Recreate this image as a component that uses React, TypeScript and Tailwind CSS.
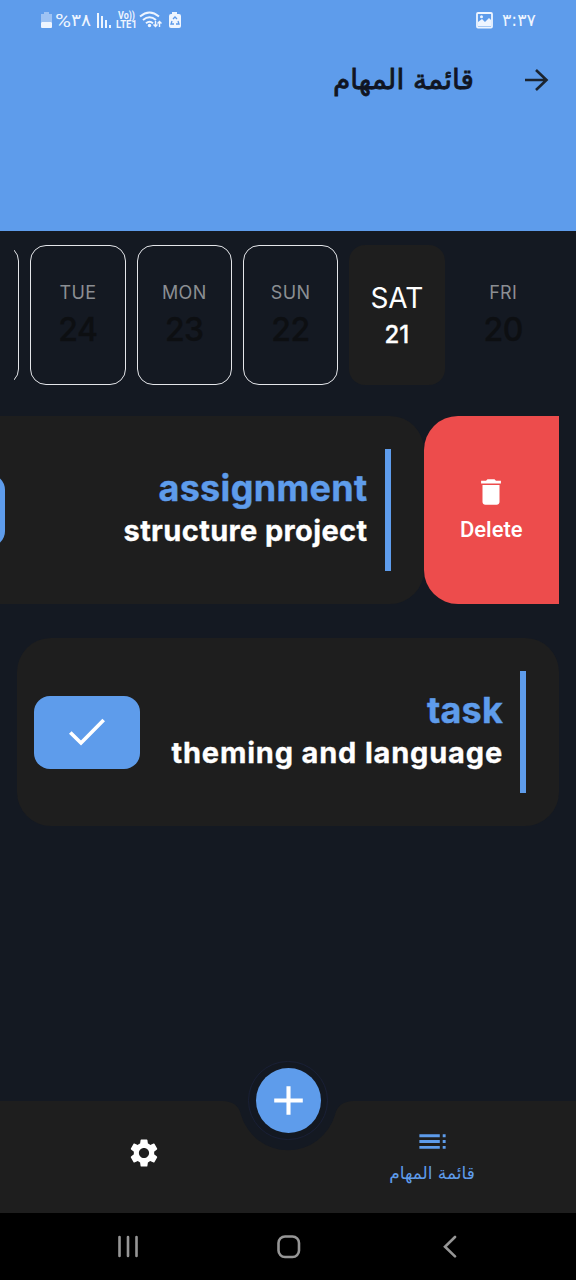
import React from "react";
import { MdAdd, MdDelete, MdSettings, MdToc } from "react-icons/md";

const ARABIC = "font-['DejaVu_Sans',sans-serif]";

function StatusBar() {
  return (
    <div className="flex h-10 items-center justify-between pl-10 pr-[40px] text-white">
      <svg width="142" height="40" viewBox="0 0 142 40" fill="#eef5ff">
        <path d="M4 12h5v2h3v8H1v-8h3z" opacity="0.45" />
        <rect x="1" y="22" width="11" height="6" rx="1" />
        <text x="15" y="27" fontSize="19" textLength="16" lengthAdjust="spacingAndGlyphs" fontFamily="Roboto">%</text>
        <text x="31" y="26" fontSize="17" direction="ltr" textLength="20" lengthAdjust="spacingAndGlyphs" fontFamily="DejaVu Sans">٣٨</text>
        <rect x="57" y="13" width="2" height="15" />
        <rect x="61" y="16" width="2" height="12" />
        <rect x="65" y="20" width="2" height="8" />
        <rect x="69" y="25" width="2" height="3" />
        <text x="78" y="19" fontSize="10" fontWeight="700" textLength="17" lengthAdjust="spacingAndGlyphs" fontFamily="Roboto">Vo))</text>
        <text x="76" y="27.5" fontSize="10" fontWeight="700" textLength="21" lengthAdjust="spacingAndGlyphs" fontFamily="Roboto">LTE1</text>
        <g fill="none" stroke="#eef5ff" strokeWidth="2">
          <path d="M100 16.500q9.500-8 19 0M103 20q6.500-5.500 13 0M106 23.300q3.500-3 7 0" />
          <path d="M115.500 21v5.500m-2-2l2 2 2-2M119.500 27v-5.500m-2 2l2-2 2 2" strokeWidth="1.400" />
        </g>
        <circle cx="109.500" cy="25.500" r="1.700" />
        <path d="M132 12h5v2h2q2 0 2 2v10q0 2-2 2h-8q-2 0-2-2V16q0-2 2-2h1z" />
        <path d="M133 19l2-2 2 2M138 21l1 3h-3M132 21l-1 3h3" fill="none" stroke="#5b99ea" strokeWidth="1.300" />
      </svg>
      <svg width="60" height="40" viewBox="0 0 60 40" fill="#eef5ff">
        <rect x="1" y="13" width="15" height="14.500" rx="1" fill="none" stroke="#eef5ff" strokeWidth="1.800" />
        <path d="M2 25v-3l4-3 3 3 4-4 2 2v6H2z" />
        <circle cx="5.500" cy="16.800" r="1.500" />
        <text x="26" y="26" fontSize="17" direction="ltr" textLength="34" lengthAdjust="spacingAndGlyphs" fontFamily="DejaVu Sans">٣:٣٧</text>
      </svg>
    </div>
  );
}

function DateStrip() {
  const card = "flex h-[139.500px] w-[95.300px] shrink-0 flex-col items-center rounded-2xl";
  const outline = "border-[1.500px] border-[#e4e6ea]";
  const days = [
    { day: "TUE", date: "24" },
    { day: "MON", date: "23" },
    { day: "SUN", date: "22" },
  ];
  return (
    <div className="ml-[14px] mr-4 mt-[14px] flex h-[140px] justify-end gap-[11px] overflow-hidden pr-[9.200px] font-['Inter',sans-serif]">
      <div className={`${card} ${outline}`} />
      {days.map((d) => (
        <div key={d.day} className={`${card} ${outline} pt-[35px]`}>
          <span className="text-[18px] leading-6 tracking-[0.300px] text-[#8b8e93]">{d.day}</span>
          <span className="mt-[5px] text-[32px] font-medium leading-10 tracking-[-0.500px] text-[#0d0f12] [-webkit-text-stroke:0.300px_#0d0f12]">{d.date}</span>
        </div>
      ))}
      <div className={`${card} bg-[#1e1e1e] pt-[35px]`}>
        <span className="text-[28px] leading-9 text-white">SAT</span>
        <span className="mt-[3px] text-[24px] font-medium leading-8 text-white [-webkit-text-stroke:0.300px_#ffffff]">21</span>
      </div>
      <div className={`${card} pt-[36px]`}>
        <span className="text-[18px] leading-6 tracking-[0.300px] text-[#8b8e93]">FRI</span>
        <span className="mt-[5px] text-[32px] font-medium leading-10 tracking-[-0.500px] text-[#0d0f12] [-webkit-text-stroke:0.300px_#0d0f12]">20</span>
      </div>
    </div>
  );
}

function TaskCard({ title, detail, titleClass, detailClass }: { title: string; detail: string; titleClass: string; detailClass: string }) {
  return (
    <div className="flex h-[188px] w-[542px] shrink-0 items-center rounded-[34px] bg-[#1e1e1e] pl-[17px] pr-[33px]">
      <div className="flex h-[73px] w-[106px] shrink-0 items-center justify-center rounded-2xl bg-[#5e9ceb]">
        <svg width="36" height="28" viewBox="0 0 36 28" fill="none" stroke="white" strokeWidth="3.700">
          <path d="M1.300 14.500L12 25 34.700 2" />
        </svg>
      </div>
      <div className="flex min-w-0 flex-1 flex-col items-end whitespace-nowrap pb-[1px] pr-[17px] font-['Inter',sans-serif]">
        <span className={`text-[36px] font-bold leading-[43px] text-[#5e9ceb] [-webkit-text-stroke:0.400px_#5e9ceb] ${titleClass}`}>{title}</span>
        <span className={`text-[29px] font-bold leading-[42px] text-white [-webkit-text-stroke:0.300px_#ffffff] ${detailClass}`}>{detail}</span>
      </div>
      <div className="h-[122px] w-[6px] bg-[#5e9ceb]" />
    </div>
  );
}

function BottomBar() {
  return (
    <div className="relative flex h-[112px]">
      <svg className="absolute left-0 top-0" width="576" height="112" viewBox="0 0 576 112">
        <path d="M0 0H222Q238 0 241 14A49 49 0 0 0 335 14Q338 0 354 0H576V112H0Z" fill="#1e1e1e" />
      </svg>
      <div className="absolute left-[248px] top-[-40px] flex h-[79px] w-[80px] items-center justify-center rounded-full border border-[#1a2036] bg-[#131821]">
        <div className="flex h-[65px] w-[65px] shrink-0 items-center justify-center rounded-full bg-[#5e9ceb]">
          <MdAdd size={49} color="white" />
        </div>
      </div>
      <div className="relative flex w-1/2 justify-center pt-[35px]">
        <MdSettings size={34} color="white" />
      </div>
      <div className="relative flex w-1/2 flex-col items-center pt-[23px] text-[#5e9ceb]">
        <MdToc size={35} />
        <span dir="rtl" className={`${ARABIC} mt-[2px] whitespace-nowrap text-[17px] leading-6`}>قائمة المهام</span>
      </div>
    </div>
  );
}

export default function App() {
  return (
    <div className="flex h-[1280px] w-[576px] flex-col overflow-hidden bg-[#141922]">
      <header className="h-[231px] shrink-0 bg-[#5e9ceb]">
        <StatusBar />
        <div className="flex h-20 items-center justify-end pr-[23px]">
          <h1 dir="rtl" className={`${ARABIC} mr-[45px] whitespace-nowrap text-[28px] leading-10 text-[#101522] [-webkit-text-stroke:0.800px_#101522]`}>قائمة المهام</h1>
          <svg width="34" height="34" viewBox="0 0 34 34" fill="none" stroke="#1b2430" strokeWidth="2.600">
            <path d="M6 17H27.500M17 7L27.500 17 17 27" />
          </svg>
        </div>
      </header>
      <DateStrip />
      <main className="flex flex-1 flex-col gap-[34px] pl-[17px] pt-[31px]">
        <div className="flex w-[542px] justify-end">
          <TaskCard title="assignment" detail="structure project" titleClass="tracking-[0.300px]" detailClass="tracking-[0.370px]" />
          <div className="flex h-[188px] w-[135.500px] shrink-0 flex-col items-center rounded-l-[34px] bg-[#ed4c4c] pt-[59px] text-white">
            <MdDelete size={34} />
            <span className="mt-[7px] font-['Roboto',sans-serif] text-[22px] font-medium leading-7">Delete</span>
          </div>
        </div>
        <TaskCard title="task" detail="theming and language" titleClass="tracking-[0.200px]" detailClass="tracking-[0.820px]" />
      </main>
      <BottomBar />
      <nav className="flex h-[67px] shrink-0 items-center bg-black">
        <svg width="576" height="67" viewBox="0 0 576 67" fill="none" stroke="#969696" strokeWidth="2.600" strokeLinecap="round">
          <path d="M119.500 24v19M128 24v19M136.500 24v19M455 24l-10 9.700 10 9.700" />
          <rect x="278.500" y="23.500" width="20.500" height="20.500" rx="6.500" />
        </svg>
      </nav>
    </div>
  );
}
